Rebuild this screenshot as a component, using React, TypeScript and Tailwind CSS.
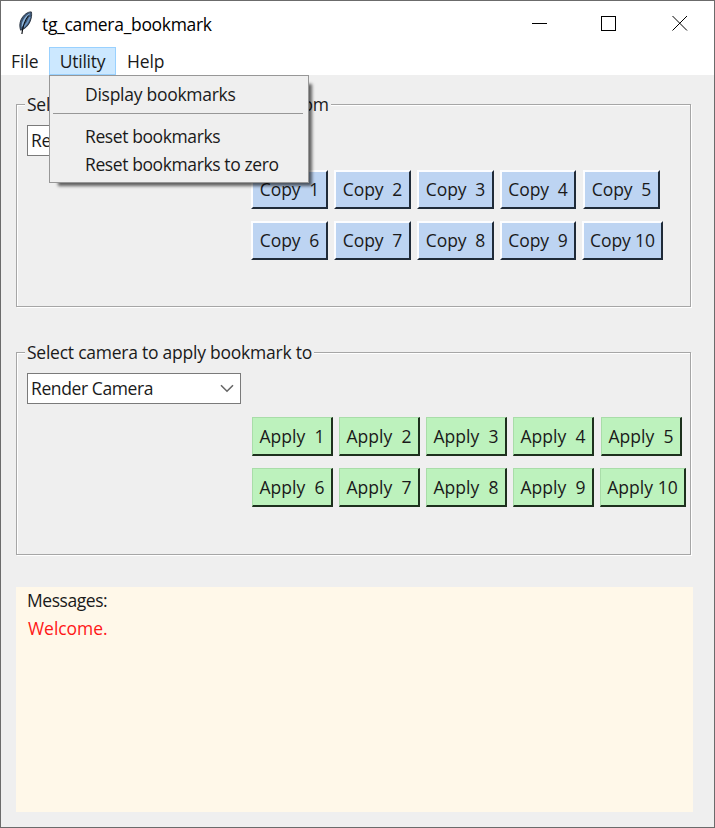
import React from "react";

type Tone = "blue" | "green";

function FeatherIcon() {
  return (
    <svg width="16" height="24" viewBox="0 0 16 24" className="mb-[3px] shrink-0">
      <path d="M14.300 0.900C10.600 0.800 6.400 3.800 4 8.800C2.500 12.400 2.500 15.800 3.600 19.200L5.800 18.400C10.200 16.400 13.200 12 14.200 7C14.700 4.800 14.800 2.600 14.300 0.900Z" fill="#3d5878" stroke="#202a38" strokeWidth="0.900" />
      <path d="M13.100 2.200C9.500 3.600 6.500 7.500 4.900 12.500L4.500 16.500C7.800 12.500 9.900 8 13.100 2.200Z" fill="#8fb6dc" />
      <path d="M12.900 6C11.700 9.800 9.700 13 6.800 16" stroke="#6d96c2" strokeWidth="1.600" fill="none" />
      <path d="M11.600 4.500C8 9 5.800 14 4.900 23" stroke="#0b0e12" strokeWidth="1.200" fill="none" />
    </svg>
  );
}

function TitleBar() {
  return (
    <header className="flex h-[46px] items-center bg-white pl-4">
      <FeatherIcon />
      <h1 className="ml-[9px] flex-1 whitespace-pre pb-px text-[17.500px] leading-6 tracking-[-0.310px] text-black">tg_camera_bookmark</h1>
      <svg width="158" height="17" viewBox="0 0 158 17" className="mb-px mr-[25px]" fill="none" stroke="#000" shapeRendering="crispEdges">
        <path d="M1 8.500H16" />
        <rect x="70.500" y="1.500" width="14" height="14" />
        <path d="M141.500 1L156 15.500M156 1L141.500 15.500" shapeRendering="auto" />
      </svg>
    </header>
  );
}

function UtilityMenu() {
  return (
    <div className="absolute left-0 top-full z-10 h-[108px] w-[260px] border border-[#979797] bg-[#efefef] pl-[3px] pr-[5px] shadow-[6px_6px_3px_-3px_rgba(0,0,0,0.6)]">
      <div className="flex h-[37px] items-center whitespace-pre pb-px pl-8 tracking-[-0.270px]">Display bookmarks</div>
      <div className="h-px bg-[#979797]" />
      <div className="mt-[8px] flex h-[28px] items-center whitespace-pre pl-8 tracking-[-0.400px]">Reset bookmarks</div>
      <div className="flex h-[28px] items-center whitespace-pre pl-8 tracking-[-0.400px]">Reset bookmarks to zero</div>
    </div>
  );
}

function MenuBar() {
  return (
    <nav className="flex h-[28px] bg-white leading-[28px] tracking-[-0.270px]">
      <div className="w-[48px] pl-[10px] tracking-normal">File</div>
      <div className="relative w-[68px] text-center">
        <div className="h-[28px] w-[67px] border border-[#99d1ff] bg-[#cce8ff] leading-[27px]">Utility</div>
        <UtilityMenu />
      </div>
      <div className="pl-[10px] tracking-[-0.100px]">Help</div>
    </nav>
  );
}

function Combo() {
  return (
    <div className="flex h-[31px] w-[214px] items-center justify-between border border-[#7a7a7a] bg-white pl-[3px] pr-[6px] tracking-[-0.400px]">
      <span className="pb-px">Render Camera</span>
      <svg width="14" height="9" viewBox="0 0 14 9" fill="none" stroke="#666" strokeWidth="1.600">
        <path d="M1 1.200L7 7.200L13 1.200" />
      </svg>
    </div>
  );
}

const tones: Record<Tone, string> = {
  blue: "border-2 pb-[2px] bg-[#bdd4f2] border-t-[#fcfdff] border-l-[#fcfdff] border-r-[#202b38] border-b-[#202b38] tracking-[-0.100px]",
  green: "border border-r-2 border-b-2 bg-[#bdf2bd] border-t-[#a9dda9] border-l-[#a9dda9] border-r-[#1d301d] border-b-[#1d301d] tracking-[0.050px]",
};

function ButtonGrid({ verb, tone }: { verb: string; tone: Tone }) {
  const columns = tone === "blue" ? "grid-cols-[77px_77px_77px_76px_81px]" : "grid-cols-[81px_81px_81px_81px_86px]";
  const fifth = tone === "blue" ? "ml-px mr-[3px]" : "ml-px mr-[4px]";
  return (
    <div className={`grid w-max gap-x-[6px] gap-y-3 ${columns}`}>
      {Array.from({ length: 10 }, (_, i) => (
        <button key={i} className={`flex h-[39px] items-center justify-center whitespace-pre leading-[34px] ${tones[tone]} ${i === 4 ? fifth : ""}`}>
          {verb + (i === 9 ? " " : "  ") + (i + 1)}
        </button>
      ))}
    </div>
  );
}

function CameraGroup({ title, verb, tone }: { title: string; verb: string; tone: Tone }) {
  return (
    <section className="h-[216px] w-[675px]">
      <div className="flex h-[203px] flex-col border border-[#a6a6a6] shadow-[inset_1px_1px_0_#fff,1px_1px_0_#fff]">
        <h2 className="-mt-[12px] ml-[8px] w-max whitespace-pre bg-[#efefef] px-[2px] leading-[23px] tracking-[-0.240px]">{title}</h2>
        <div className="ml-[10px] mt-[9px]">
          <Combo />
        </div>
        <div className={tone === "blue" ? "ml-[234px] mt-[14px]" : "ml-[235px] mt-[13px]"}>
          <ButtonGrid verb={verb} tone={tone} />
        </div>
      </div>
    </section>
  );
}

export default function App() {
  return (
    <div className="flex h-[828px] w-[715px] flex-col overflow-hidden border border-[#6b6b6b] bg-[#efefef] font-['Open_Sans','Noto_Sans',sans-serif] text-[17.500px] text-[#1a1a1a]">
      <TitleBar />
      <MenuBar />
      <main className="flex flex-col pl-[15px] pt-[29px]">
        <CameraGroup title="Select camera to copy bookmark from" verb="Copy" tone="blue" />
        <div className="mt-8">
          <CameraGroup title="Select camera to apply bookmark to" verb="Apply" tone="green" />
        </div>
        <section className="mt-[19px] h-[225px] w-[677px] bg-[#fff8e9] pl-[11px]">
          <div className="h-[27px] leading-[26px] tracking-[-0.450px]">Messages:</div>
          <div className="h-[28px] pl-px leading-[28px] tracking-[-0.050px] text-[#ff1717]">Welcome.</div>
        </section>
      </main>
    </div>
  );
}
